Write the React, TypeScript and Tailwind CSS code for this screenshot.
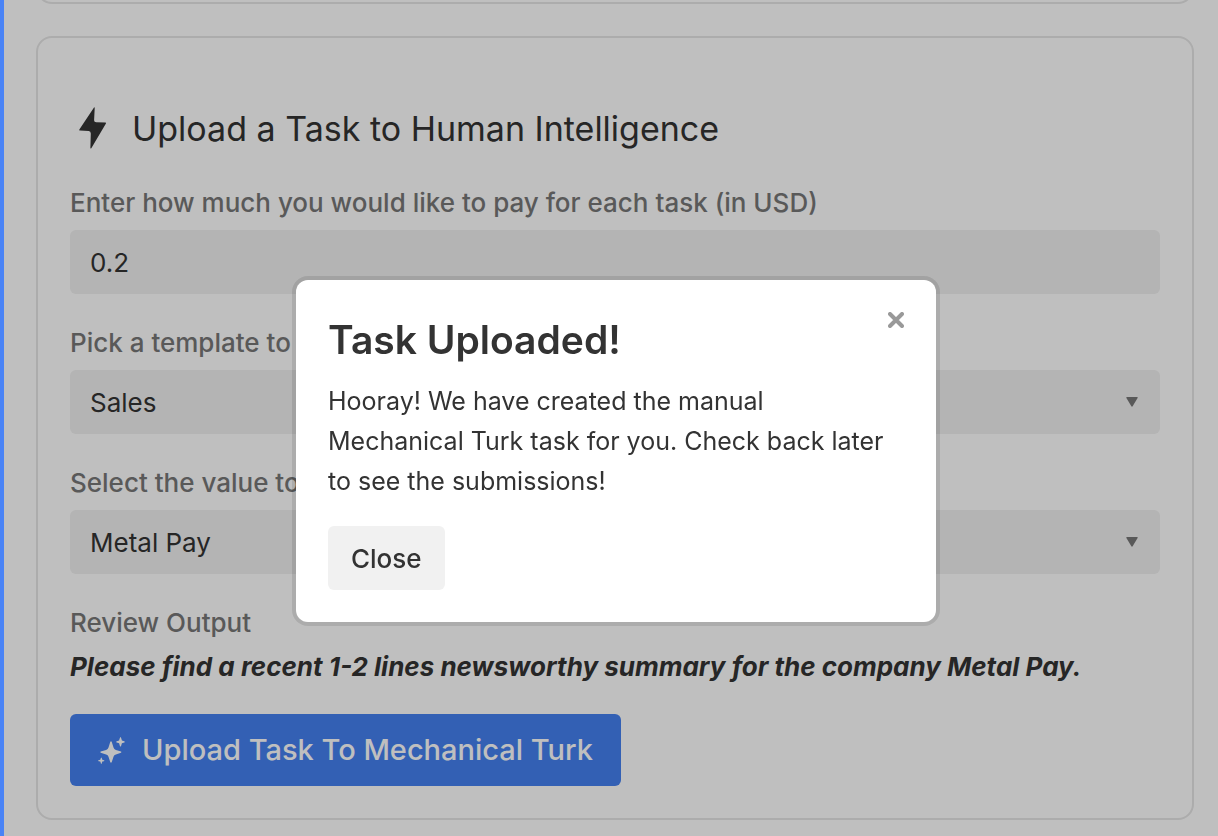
import { useState } from "react";
import type { ReactNode } from "react";

const fieldClass =
  "block h-16 w-full appearance-none rounded-md bg-[#f0f0f0] px-5 text-[26px] text-[#333333] outline-none";

function Field({ id, label, children }: { id: string; label: string; children: ReactNode }) {
  return (
    <div className="flex flex-col gap-[7px]">
      <label htmlFor={id} className="text-[26px] leading-10 font-medium whitespace-nowrap text-[#777777]">
        {label}
      </label>
      {children}
    </div>
  );
}

function SelectField({ id, label, options }: { id: string; label: string; options: string[] }) {
  return (
    <Field id={id} label={label}>
      <div className="relative">
        <select id={id} className={fieldClass}>
          {options.map((option) => (
            <option key={option}>{option}</option>
          ))}
        </select>
        <svg
          viewBox="0 0 12 10"
          className="pointer-events-none absolute top-[27px] right-[22px] h-[10px] w-3 fill-[#777777]"
          aria-hidden="true"
        >
          <path d="M1 0H11Q12.3 0 11.6 1.1L6.8 9.1Q6 10.2 5.2 9.1L.4 1.1Q-.3 0 1 0Z" />
        </svg>
      </div>
    </Field>
  );
}

function BoltIcon() {
  return (
    <svg viewBox="0 0 28 42" className="h-[42px] w-7 fill-[#333333]" aria-hidden="true">
      <path d="M15 .6Q15.7-.3 15.7 1L15.1 13.2Q15.1 15.3 17.2 15.3L26.4 15.5Q27.4 15.6 26.8 16.7L12.3 41.2Q11.3 42.2 11.4 40.6L11.8 26.4Q11.8 24.2 9.7 24.1L1 23.6Q-.2 23.4.5 22.3Z" />
    </svg>
  );
}

function SparklesIcon() {
  return (
    <svg viewBox="0 0 27 27" className="size-[27px] fill-white" aria-hidden="true">
      <path d="M12.3 4.7Q13 4 13.7 4.7L15.5 10.6Q16 12.5 17.9 13L23 14.6Q23.9 15.2 23 15.8L17.9 17.4Q16 17.9 15.5 19.8L13.7 25.3Q13 26 12.3 25.3L10.5 19.8Q10 17.9 8.1 17.4L2.7 15.8Q1.8 15.2 2.7 14.6L8.1 13Q10 12.5 10.5 10.6Z" />
      <path d="M22.5 0Q23 0 23.9 3.6Q27 4.6 27 5Q27 5.4 23.9 6.2Q23 9.7 22.5 9.7Q22 9.7 21.1 6.2Q18 5.4 18 5Q18 4.6 21.1 3.6Q22 0 22.5 0Z" />
      <path d="M3.3 20.4Q3.7 20.4 4.3 22.8Q6.5 23.4 6.5 23.7Q6.5 24 4.3 24.6Q3.7 27 3.3 27Q2.9 27 2.3 24.6Q0 24 0 23.7Q0 23.4 2.3 22.8Q2.9 20.4 3.3 20.4Z" />
    </svg>
  );
}

function SuccessDialog({ onClose }: { onClose: () => void }) {
  return (
    <div className="fixed inset-y-0 right-0 left-1 flex items-start justify-center bg-black/25 pt-[280px] pl-[10px]">
      <div
        role="dialog"
        aria-modal="true"
        aria-labelledby="dialog-title"
        className="relative w-full max-w-[640px] rounded-xl bg-white p-8 text-[#333333] ring-4 ring-black/10"
      >
        <h2 id="dialog-title" className="text-[39px] leading-[56px] font-semibold">
          Task Uploaded!
        </h2>
        <p className="mt-[13px] text-[25px] leading-10">
          Hooray! We have created the manual Mechanical Turk task for you. Check back later to see the submissions!
        </p>
        <button
          type="button"
          onClick={onClose}
          className="mt-[25px] flex h-16 items-center rounded-md bg-[#f1f1f1] px-[23px] text-[26px] font-medium"
        >
          Close
        </button>
        <button
          type="button"
          onClick={onClose}
          aria-label="Dismiss"
          className="absolute top-6 right-6 flex size-8 items-center justify-center"
        >
          <svg viewBox="0 0 16 16" className="size-4 stroke-[#999999]" aria-hidden="true">
            <path d="M2 2L14 14M14 2L2 14" strokeWidth="4" strokeLinecap="round" />
          </svg>
        </button>
      </div>
    </div>
  );
}

export default function App() {
  const [open, setOpen] = useState(true);

  return (
    <div className="h-screen overflow-hidden border-l-4 border-[#4a83f5] bg-white pr-6 pl-8 font-['Inter',sans-serif] text-[#333333]">
      <div className="-mt-7 h-8 rounded-b-2xl border-x-2 border-b-2 border-[#e6e6e6]" />
      <main className="mt-8 rounded-2xl border-2 border-[#e6e6e6] px-8 pt-16 pb-8">
        <h1 className="flex h-[52px] items-center gap-[25px] pl-[9px] text-[34px] whitespace-nowrap">
          <BoltIcon />
          Upload a Task to Human Intelligence
        </h1>
        <form className="mt-[29px] flex flex-col gap-[29px]" onSubmit={(event) => event.preventDefault()}>
          <Field id="pay" label="Enter how much you would like to pay for each task (in USD)">
            <input id="pay" type="text" defaultValue="0.2" className={fieldClass} />
          </Field>
          <SelectField id="template" label="Pick a template to use" options={["Sales", "Research"]} />
          <SelectField id="value" label="Select the value to use" options={["Metal Pay"]} />
          <div>
            <h2 className="text-[26px] leading-10 font-medium text-[#777777]">Review Output</h2>
            <p className="mt-1 text-[26px] leading-10 font-bold whitespace-nowrap italic">
              Please find a recent 1-2 lines newsworthy summary for the company Metal Pay.
            </p>
            <button
              type="submit"
              className="mt-[27px] flex h-[72px] items-center gap-[17px] rounded-md bg-[#4480f1] px-7 text-[29px] font-medium whitespace-nowrap text-white"
            >
              <SparklesIcon />
              Upload Task To Mechanical Turk
            </button>
          </div>
        </form>
      </main>
      {open && <SuccessDialog onClose={() => setOpen(false)} />}
    </div>
  );
}
